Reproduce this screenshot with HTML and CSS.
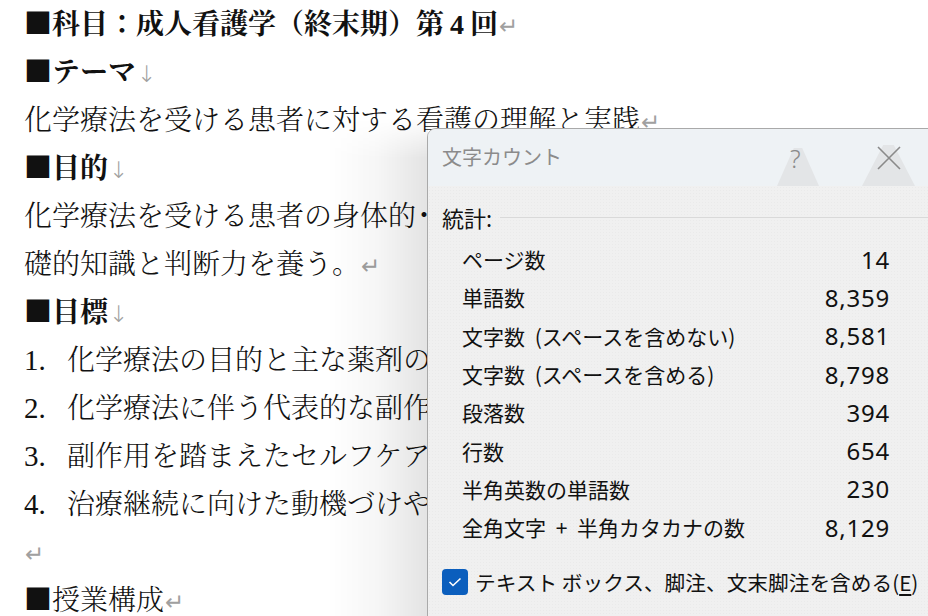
FILE: index.html
```html
<!DOCTYPE html>
<html lang="ja">
<head>
<meta charset="utf-8">
<link rel="stylesheet" href="styles.css">
</head>
<body>
<div class="doc">
  <p class="line head">■科目：成人看護学（終末期）第<span class="num">4</span>回<span class="pm">↵</span></p>
  <p class="line head">■テーマ<span class="lb">↓</span></p>
  <p class="line">化学療法を受ける患者に対する看護の理解と実践<span class="pm">↵</span></p>
  <p class="line head">■目的<span class="lb">↓</span></p>
  <p class="line">化学療法を受ける患者の身体的<span class="dot">・</span>心理的・社会的な課題を理解し、看護実践に必要な基</p>
  <p class="line">礎的知識と判断力を養う。<span class="pm">↵</span></p>
  <p class="line head">■目標<span class="lb">↓</span></p>
  <p class="line item"><span class="n">1.</span>化学療法の目的と主な薬剤の作用・副作用を説明できる。</p>
  <p class="line item"><span class="n">2.</span>化学療法に伴う代表的な副作用と看護援助を説明できる。</p>
  <p class="line item"><span class="n">3.</span>副作用を踏まえたセルフケア支援の方法を説明できる。</p>
  <p class="line item"><span class="n">4.</span>治療継続に向けた動機づけや心理的支援を説明できる。</p>
  <p class="line"><span class="pm">↵</span></p>
  <p class="line head light">■授業構成<span class="pm">↵</span></p>
</div>

<div class="shade"></div>

<div class="dialog">
  <div class="titlebar">
    <span class="title">文字カウント</span>
    <div class="tri tri-help"></div>
    <div class="tri tri-close"></div>
    <span class="help">?</span>
    <svg class="close" width="24" height="24" viewBox="0 0 24 24"><path d="M1 1 L23 23 M23 1 L1 23" stroke="#8a8a8a" stroke-width="1.6" fill="none"/></svg>
  </div>
  <div class="body">
    <div class="section"><span>統計:</span><span class="rule"></span></div>
    <div class="stats">
      <div class="row"><span>ページ数</span><span class="val">14</span></div>
      <div class="row"><span>単語数</span><span class="val">8,359</span></div>
      <div class="row"><span>文字数 (スペースを含めない)</span><span class="val">8,581</span></div>
      <div class="row"><span>文字数 (スペースを含める)</span><span class="val">8,798</span></div>
      <div class="row"><span>段落数</span><span class="val">394</span></div>
      <div class="row"><span>行数</span><span class="val">654</span></div>
      <div class="row"><span>半角英数の単語数</span><span class="val">230</span></div>
      <div class="row"><span>全角文字 + 半角カタカナの数</span><span class="val">8,129</span></div>
    </div>
    <div class="check">
      <span class="box"><svg width="14" height="10" viewBox="0 0 14 10"><path d="M1.5 5 L5 8.5 L12.5 1.5" stroke="#fff" stroke-width="1.6" fill="none"/></svg></span>
      <span>テキスト ボックス、脚注、文末脚注を含める(<u>E</u>)</span>
    </div>
  </div>
</div>
</body>
</html>
```

FILE: styles.css
```css
html, body {
  margin: 0;
  padding: 0;
  background: #ffffff;
  overflow: hidden;
  width: 928px;
  height: 616px;
}

.doc {
  margin-top: -2px;
  padding-left: 24px;
  font-family: "Noto Serif CJK JP", "Liberation Serif", "Noto Sans CJK JP", serif;
  font-size: 28px;
  color: #111;
}

.line {
  margin: 0;
  height: 48px;
  line-height: 48px;
  white-space: nowrap;
  font-weight: 300;
}

.head {
  font-weight: 700;
}

.head.light {
  font-weight: 300;
}

.num {
  font-family: "Liberation Serif", serif;
  margin: 0 6px;
}

.dot {
  margin-left: -6px;
  margin-right: 6px;
}

.pm, .lb {
  font-family: "DejaVu Sans", sans-serif;
  font-weight: 300;
  font-size: 23px;
  color: #a0a0a0;
  margin-left: 1px;
}

.item .n {
  display: inline-block;
  width: 43px;
  font-family: "Liberation Serif", serif;
  font-weight: 400;
  font-size: 29px;
}

.shade {
  position: absolute;
  left: 327px;
  top: 118px;
  width: 101px;
  height: 498px;
  background: linear-gradient(to right, rgba(0,0,0,0) 0%, rgba(0,0,0,0.035) 50%, rgba(0,0,0,0.11) 100%);
  -webkit-mask-image: linear-gradient(to bottom, transparent 0, #000 40px);
  mask-image: linear-gradient(to bottom, transparent 0, #000 40px);
}

.dialog {
  position: absolute;
  left: 427px;
  top: 128px;
  width: 520px;
  height: 520px;
  border: 1px solid #a9a9a9;
  border-radius: 9px;
  overflow: hidden;
  background: #f0f0f0;
  font-family: "Noto Sans", "Noto Sans CJK JP", sans-serif;
  color: #111;
}

.titlebar {
  position: relative;
  height: 57px;
  background: #eef2f5;
}

.title {
  position: absolute;
  left: 14px;
  top: 13px;
  font-family: "Noto Sans CJK JP", sans-serif;
  font-size: 20px;
  color: #8b8b8b;
}

.tri {
  position: absolute;
  background: #e3e5e7;
}

.tri-help {
  left: 349px;
  top: 19px;
  width: 42px;
  height: 38px;
  clip-path: polygon(40% 0, 60% 0, 100% 100%, 0 100%);
}

.tri-close {
  left: 434px;
  top: 16px;
  width: 53px;
  height: 41px;
  clip-path: polygon(40% 0, 60% 0, 100% 100%, 0 100%);
}

.help {
  position: absolute;
  left: 362px;
  top: 12px;
  font-family: "Noto Sans", sans-serif;
  font-size: 25px;
  font-weight: 300;
  color: #8a8a8a;
}

.close {
  position: absolute;
  left: 449px;
  top: 17px;
}

.body {
  padding: 16px 6px 0 14px;
  background-image: radial-gradient(rgba(0,0,0,0.025) 0.6px, transparent 0.7px);
  background-size: 3px 3px;
  height: 470px;
}

.section {
  display: flex;
  align-items: center;
  gap: 8px;
  font-family: "Noto Sans CJK JP", sans-serif;
  font-size: 22px;
  height: 30px;
}

.rule {
  flex: 1;
  height: 1px;
  background: #d9d9d9;
}

.stats {
  margin-top: 8px;
  padding-left: 20px;
  width: 428px;
}

.row {
  display: flex;
  justify-content: space-between;
  align-items: center;
  height: 38.3px;
  font-family: "Noto Sans CJK JP", sans-serif;
  font-size: 21px;
  word-spacing: 5px;
}

.val {
  font-family: "Noto Sans", sans-serif;
  font-size: 24px;
  letter-spacing: 0.8px;
  word-spacing: 0;
}

.check {
  display: flex;
  align-items: center;
  gap: 7px;
  margin-top: 21px;
  font-family: "Noto Sans CJK JP", sans-serif;
  font-size: 20.7px;
}

.box {
  width: 26px;
  height: 26px;
  border-radius: 4px;
  background: #0b5ebd;
  display: flex;
  align-items: center;
  justify-content: center;
}

u {
  text-underline-offset: 3px;
}
```
